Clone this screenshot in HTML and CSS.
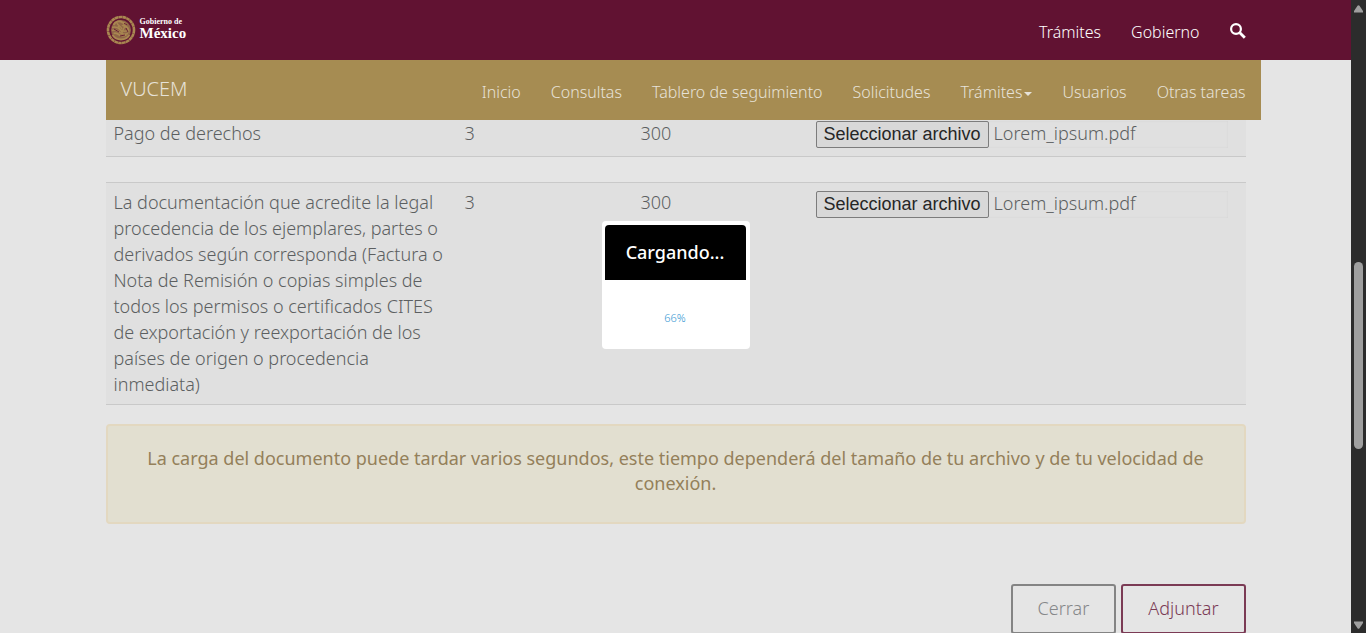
FILE: index.html
```html
<!DOCTYPE html>
<html lang="es">
<head>
<meta charset="utf-8">
<meta name="viewport" content="width=device-width, initial-scale=1">
<title>VUCEM</title>
<link rel="stylesheet" href="styles.css">
</head>
<body>
<div class="page">
  <header class="gov-bar">
    <div class="container gov-inner">
      <a class="brand" href="#" aria-label="Gobierno de México">
        <svg class="seal" viewBox="0 0 30 30" fill="none" stroke="#a98751" aria-hidden="true">
          <circle cx="15" cy="15" r="13" stroke-width="2.6" stroke-dasharray="3.600 .3"/>
          <circle cx="15" cy="15" r="10" fill="#8f6548" stroke="none"/>
          <path d="M7.500 10c2-4 6-4.500 9-2.500l3 1.500-2 1.500c3 1 5.500 3.500 5 7" stroke-width="2"/>
          <path d="M6 12.500c3-1 6 0 8 2s5 2 8 1M6 15.500c3-1 6 0 8 2s5 2 8 1M7.500 18.500c2-1 4 0 6 1.500s4 1 7 0" stroke-width="1.600"/>
          <path d="M11 8c1 3 4 3 5 6M19 11l-3 6M12 11l5 8" stroke-width="1.400"/>
          <path d="M6.500 20c2 3 4.500 4.500 8.500 4.500s6.500-1.500 8.500-4.500" stroke-width="1.800"/>
          <path d="M18 8.500l3 1M8 14l5 3M14 21l5-1M20 13l2 4" stroke="#611232" stroke-width=".9"/>
        </svg>
        <span class="brand-text"><span class="brand-small">Gobierno de</span><span class="brand-big">México</span></span>
      </a>
      <nav class="gov-nav" aria-label="Gobierno">
        <a href="#">Trámites</a>
        <a href="#">Gobierno</a>
        <a href="#" aria-label="Buscar"><svg class="search" viewBox="0 0 16 16" fill="none" stroke="#fff" aria-hidden="true"><circle cx="6" cy="6" r="4.900" stroke-width="2.200"/><path d="M9.800 9.800l5 5" stroke-width="2.800"/></svg></a>
      </nav>
    </div>
  </header>

  <div class="container">
    <div class="sub-bar">
      <a class="sub-brand" href="#">VUCEM</a>
      <nav class="sub-nav" aria-label="VUCEM">
        <a href="#">Inicio</a>
        <a href="#">Consultas</a>
        <a href="#">Tablero de seguimiento</a>
        <a href="#">Solicitudes</a>
        <a href="#">Trámites<span class="caret"></span></a>
        <a href="#">Usuarios</a>
        <a href="#">Otras tareas</a>
      </nav>
    </div>
  </div>

  <main class="container content">
    <table class="docs docs-first">
      <tbody>
        <tr>
          <td class="col-name">Pago de derechos</td>
          <td class="col-num">3</td>
          <td class="col-num">300</td>
          <td><div class="file"><button type="button" class="file-btn">Seleccionar archivo</button><span class="file-name">Lorem_ipsum.pdf</span></div></td>
        </tr>
      </tbody>
    </table>
    <table class="docs">
      <tbody>
        <tr>
          <td class="col-name">La documentación que acredite la legal procedencia de los ejemplares, partes o derivados según corresponda (Factura o Nota de Remisión o copias simples de todos los permisos o certificados CITES de exportación y reexportación de los países de origen o procedencia inmediata)</td>
          <td class="col-num">3</td>
          <td class="col-num">300</td>
          <td><div class="file"><button type="button" class="file-btn">Seleccionar archivo</button><span class="file-name">Lorem_ipsum.pdf</span></div></td>
        </tr>
      </tbody>
    </table>
    <p class="notice">La carga del documento puede tardar varios segundos, este tiempo dependerá del tamaño de tu archivo y de tu velocidad de conexión.</p>
    <div class="actions">
      <button type="button" class="btn">Cerrar</button>
      <button type="button" class="btn btn-primary">Adjuntar</button>
    </div>
  </main>

  <div class="modal" role="dialog" aria-labelledby="modal-title">
    <h2 class="modal-title" id="modal-title">Cargando...</h2>
    <div class="modal-body">66%</div>
  </div>
</div>
<div class="scrollbar" aria-hidden="true">
  <svg class="arrow" viewBox="0 0 9 8"><path d="M3.500.8q1-1 2 0L9 6v1.500H0V6z" fill="#9f9f9f"/></svg>
  <div class="track"><div class="thumb"></div></div>
  <svg class="arrow" viewBox="0 0 9 8"><path d="M3.500 7.200q1 1 2 0L9 2V.5H0V2z" fill="#9f9f9f"/></svg>
</div>
</body>
</html>
```
FILE: styles.css
```css
* { box-sizing: border-box; }

body {
  margin: 0;
  display: flex;
  height: 100vh;
  overflow: hidden;
  background: #e5e5e5;
  color: #5c5f61;
  font: 300 18px/26px "Noto Sans", sans-serif;
}

a { color: inherit; text-decoration: none; }

.page { position: relative; flex: 1; min-width: 0; overflow: hidden; }
.container { max-width: 1170px; margin: 0 auto; padding: 0 15px; }

.gov-bar { background: #611232; color: #fff; }
.gov-inner { display: flex; justify-content: space-between; align-items: center; height: 60px; }
.brand { display: flex; align-items: center; gap: 4px; }
.seal { width: 30px; height: 30px; }
.brand-text { display: flex; flex-direction: column; padding-bottom: 2px; font-family: "Liberation Serif", serif; }
.brand-small { font-size: 8px; line-height: 8px; font-weight: 700; }
.brand-big { font-size: 15px; line-height: 14px; font-weight: 700; }
.gov-nav { display: flex; align-items: center; gap: 30px; font-size: 16px; padding-top: 4px; }
.search { display: block; width: 16px; height: 16px; margin-bottom: 2px; }

.sub-bar {
  display: flex;
  justify-content: space-between;
  height: 60px;
  margin-right: -15px;
  padding: 0 15px;
  background: #a68c52;
  color: #e6e2d8;
}
.sub-brand { font-size: 20px; line-height: 58px; }
.sub-nav { display: flex; gap: 30px; font-size: 16px; line-height: 64px; }
.caret {
  display: inline-block;
  margin-left: 2px;
  border: 4px solid transparent;
  border-top-color: currentColor;
  border-bottom: 0;
  vertical-align: middle;
}

.docs {
  width: 100%;
  table-layout: fixed;
  border-collapse: separate;
  border-spacing: 0;
  background: #e0e0e0;
  border-top: 1px solid #c9c9c9;
  border-bottom: 1px solid #c9c9c9;
  margin-bottom: 19px;
}
.docs td { padding: 6px 8px 7px; vertical-align: top; }
.docs .col-name { width: 351px; }
.docs .col-num { width: 176px; }

.file {
  display: flex;
  align-items: flex-start;
  height: 27px;
  margin: 2px 10px 0 -1px;
  box-shadow: inset 0 0 2px #d2d2d2;
}
.file-btn {
  height: 27px;
  padding: 0 7px 2px;
  border: 1px solid #7c7c7c;
  border-radius: 2px;
  background: #d8d8d8;
  color: #262626;
  font: 18px/24px "Liberation Sans", Arial, sans-serif;
}
.file-name { margin-left: 5px; line-height: 24px; }

.docs-first { border-top: 0; margin-bottom: 25px; }
.docs-first td { padding: 0 8px 8px; }
.docs-first .file { margin-top: 1px; }

.notice {
  margin: 0;
  padding: 20px 38px 26px;
  border: 2px solid #e3d8c0;
  border-radius: 4px;
  background: #e2dfd0;
  color: #94805a;
  font-weight: 400;
  line-height: 25px;
  text-align: center;
}
.actions { display: flex; justify-content: flex-end; gap: 5px; margin-top: 60px; }
.btn {
  height: 50px;
  padding: 0 25px 2px;
  border: 2px solid #848484;
  border-radius: 3px;
  background: transparent;
  color: #858789;
  font: inherit;
}
.btn-primary { border-color: #7b3b55; color: #7b3b55; }

.modal {
  position: absolute;
  top: 221px;
  left: 50%;
  width: 148px;
  transform: translateX(-50%);
  padding: 4px 4px 0 3px;
  border-radius: 4px;
  background: #fff;
  text-align: center;
}
.modal-title {
  margin: 0;
  border-radius: 4px 4px 0 0;
  background: #000;
  color: #fff;
  font-size: 18px;
  font-weight: 500;
  line-height: 55px;
}
.modal-body { height: 69px; padding-top: 25px; color: #3296d2; font-size: 11px; }

.scrollbar {
  display: flex;
  flex-direction: column;
  align-items: center;
  width: 15px;
  padding: 5px 0 4px;
  background: #2c2c2c;
}
.arrow { width: 9px; height: 8px; }
.track { display: flex; flex: 1; flex-direction: column; }
.track::before { content: ""; flex: 249; }
.track::after { content: ""; flex: 172; }
.thumb { flex: 187; width: 9px; border-radius: 5px; background: #9f9f9f; }
```
